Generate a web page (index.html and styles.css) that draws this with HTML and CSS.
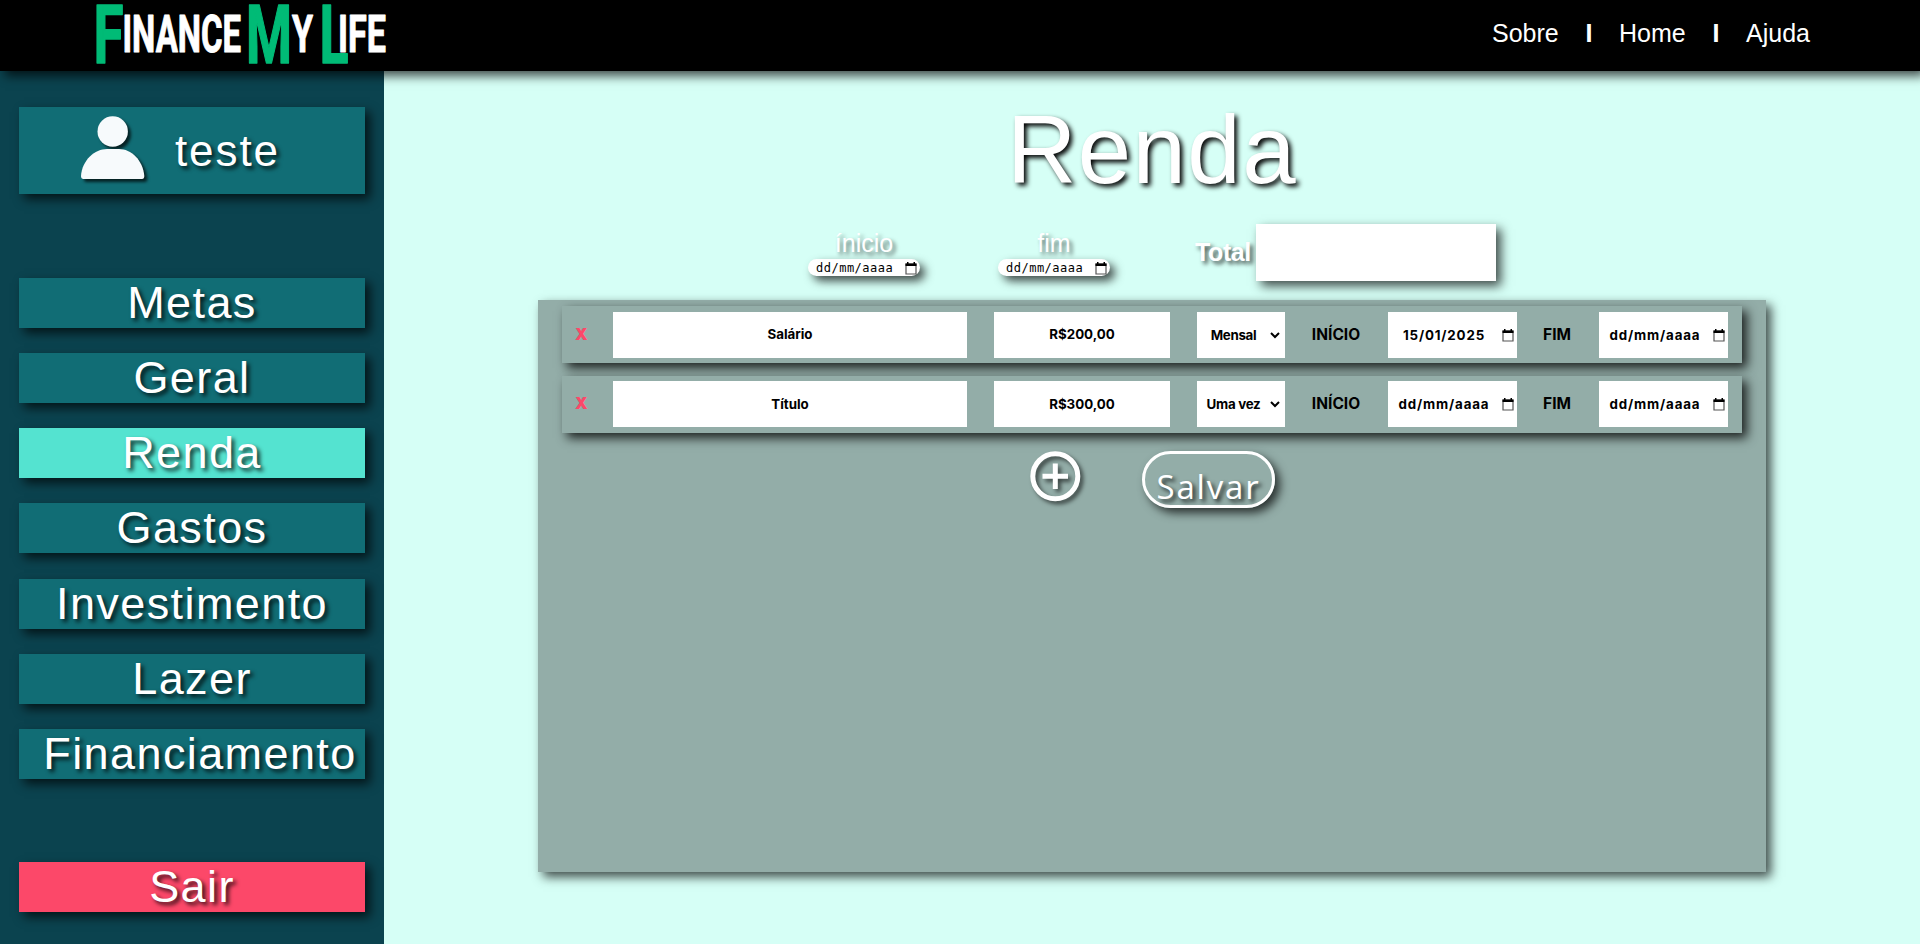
FILE: index.html
```
<!DOCTYPE html>
<html lang="pt-BR">
<head>
<meta charset="utf-8">
<title>Renda</title>
<link rel="stylesheet" href="styles.css">
</head>
<body>
<header class="topbar">
  <svg class="logo" width="300" height="71" viewBox="90 0 300 71">
    <g class="logo-big">
      <text x="93.500" y="63" textLength="30" lengthAdjust="spacingAndGlyphs">F</text>
      <text x="246" y="63" textLength="46" lengthAdjust="spacingAndGlyphs">M</text>
      <text x="319.500" y="62.500" textLength="29" lengthAdjust="spacingAndGlyphs">L</text>
    </g>
    <g class="logo-small">
      <text x="122.500" y="51.500" textLength="118.500" lengthAdjust="spacingAndGlyphs">INANCE</text>
      <text x="292" y="51.500" textLength="21" lengthAdjust="spacingAndGlyphs">Y</text>
      <text x="338" y="51.500" textLength="48" lengthAdjust="spacingAndGlyphs">IFE</text>
    </g>
  </svg>
  <nav class="topnav"><a>Sobre</a><b>I</b><a>Home</a><b>I</b><a>Ajuda</a></nav>
</header>
<div class="layout">
  <aside class="sidebar">
    <div class="user">
      <svg class="avatar" width="64" height="64" viewBox="0 0 64 64"><circle cx="31.700" cy="15.500" r="15.200"/><path d="M0 60C1 44 14 33 26 33H38C50 33 62 44 63.300 60Q63.300 63 61 63H2.500Q0 63 0 60Z"/></svg>
      <span>teste</span>
    </div>
    <nav class="menu">
      <a class="item">Metas</a>
      <a class="item">Geral</a>
      <a class="item active">Renda</a>
      <a class="item">Gastos</a>
      <a class="item">Investimento</a>
      <a class="item">Lazer</a>
      <a class="item wide">Financiamento</a>
    </nav>
    <a class="item exit">Sair</a>
  </aside>
  <main class="content">
    <h1>Renda</h1>
    <div class="filters">
      <label class="period"><span>ínicio</span><span class="pill">dd/mm/aaaa<svg class="cal" width="12" height="13" viewBox="0 0 12 13"><path class="frame" d="M1 2H11V12H1Z"/><path class="head" d="M.5 1.500H11.500V4H.5ZM2 0H3.500V2H2ZM8.500 0H10V2H8.500Z"/></svg></span></label>
      <label class="period"><span>fim</span><span class="pill">dd/mm/aaaa<svg class="cal" width="12" height="13" viewBox="0 0 12 13"><path class="frame" d="M1 2H11V12H1Z"/><path class="head" d="M.5 1.500H11.500V4H.5ZM2 0H3.500V2H2ZM8.500 0H10V2H8.500Z"/></svg></span></label>
      <div class="total"><b>Total</b><div class="total-box"></div></div>
    </div>
    <section class="panel">
      <div class="row">
        <span class="remove">X</span><div class="field">Salário</div><div class="field">R$200,00</div>
        <div class="field select"><span>Mensal</span><svg width="10" height="7" viewBox="0 0 10 7"><path d="M1 1L5 5L9 1"/></svg></div>
        <span class="tag">INÍCIO</span>
        <div class="field date"><span class="filled">15/01/2025</span><svg class="cal" width="12" height="13" viewBox="0 0 12 13"><path class="frame" d="M1 2H11V12H1Z"/><path class="head" d="M.5 1.500H11.500V4H.5ZM2 0H3.500V2H2ZM8.500 0H10V2H8.500Z"/></svg></div>
        <span class="tag">FIM</span>
        <div class="field date"><span>dd/mm/aaaa</span><svg class="cal" width="12" height="13" viewBox="0 0 12 13"><path class="frame" d="M1 2H11V12H1Z"/><path class="head" d="M.5 1.500H11.500V4H.5ZM2 0H3.500V2H2ZM8.500 0H10V2H8.500Z"/></svg></div>
      </div>
      <div class="row second">
        <span class="remove">X</span><div class="field">Título</div><div class="field">R$300,00</div>
        <div class="field select"><span>Uma vez</span><svg width="10" height="7" viewBox="0 0 10 7"><path d="M1 1L5 5L9 1"/></svg></div>
        <span class="tag">INÍCIO</span>
        <div class="field date"><span>dd/mm/aaaa</span><svg class="cal" width="12" height="13" viewBox="0 0 12 13"><path class="frame" d="M1 2H11V12H1Z"/><path class="head" d="M.5 1.500H11.500V4H.5ZM2 0H3.500V2H2ZM8.500 0H10V2H8.500Z"/></svg></div>
        <span class="tag">FIM</span>
        <div class="field date"><span>dd/mm/aaaa</span><svg class="cal" width="12" height="13" viewBox="0 0 12 13"><path class="frame" d="M1 2H11V12H1Z"/><path class="head" d="M.5 1.500H11.500V4H.5ZM2 0H3.500V2H2ZM8.500 0H10V2H8.500Z"/></svg></div>
      </div>
      <div class="actions">
        <svg class="add" width="51" height="51" viewBox="0 0 51 51"><circle cx="25.300" cy="25.300" r="22.500"/><path d="M25.300 12.500V38M12.500 25.300H38"/></svg>
        <div class="save">Salvar</div>
      </div>
    </section>
  </main>
</div>
</body>
</html>
```
FILE: styles.css
```
* { box-sizing: border-box; }
body { margin: 0; height: 944px; overflow: hidden; background: #d6fff6; font-family: Arial, "Liberation Sans", sans-serif; color: #fff; }
.topbar { position: relative; z-index: 1; height: 71px; padding: 0 110px 0 90px; background: #000; display: flex; justify-content: space-between; box-shadow: 5px 5px 10px rgba(0,0,0,.7); }
.logo { display: block; overflow: visible; font-family: Roboto, sans-serif; font-weight: 700; }
.logo-big { font-size: 82px; fill: #00bb76; stroke: #00bb76; stroke-width: 1.5px; stroke-linejoin: round; }
.logo-small { font-size: 52px; fill: #fff; stroke: #fff; stroke-width: 1px; stroke-linejoin: round; }
.topnav { display: flex; gap: 26.700px; font-size: 25px; line-height: 28px; padding-top: 19px; }
.layout { display: flex; height: 873px; }
.sidebar { width: 384px; padding: 36px 19px 0; background: #0b434f; }
.user { width: 346px; height: 87px; padding: 9px 0 0 62px; display: flex; gap: 30px; background: #116d75; box-shadow: 5px 5px 10px rgba(0,0,0,.7); font-size: 44px; letter-spacing: 1.900px; text-shadow: 3px 3px 4px rgba(0,0,0,.8); }
.user span { line-height: 70px; }
.avatar { fill: #f7fafc; filter: drop-shadow(3px 3px 1.500px rgba(0,0,0,.7)); }
.menu { margin-top: 84px; display: flex; flex-direction: column; gap: 25.160px; }
.item { display: block; width: 346px; height: 50px; line-height: 49px; background: #116d75; text-align: center; font-size: 45px; letter-spacing: 1.400px; text-shadow: 3px 3px 4px rgba(0,0,0,.8); box-shadow: 5px 5px 10px rgba(0,0,0,.7); }
.active { background: #54e3d0; }
.wide { padding-left: 16px; }
.exit { margin-top: 83px; background: #fc4869; }
.content { width: 1536px; display: flex; flex-direction: column; align-items: center; }
h1 { margin: 24px 0 0; font-size: 96px; font-weight: 400; line-height: 110px; letter-spacing: 1.400px; text-shadow: 3px 3px 5px #000; }
.filters { width: 688px; height: 76px; margin-top: 19px; display: flex; align-items: flex-start; }
.period { width: 112px; margin: 4px 78px 0 0; display: flex; flex-direction: column; align-items: center; font-size: 25px; line-height: 30px; text-shadow: 3px 3px 4px rgba(0,0,0,.6); }
.pill { width: 112px; height: 17px; margin-top: 1px; padding: 1px 3px 0 8px; border-radius: 9px; background: #fff; color: #000; display: flex; align-items: center; justify-content: space-between; font: 12px/16px "DejaVu Sans Mono", monospace; letter-spacing: .5px; text-shadow: none; box-shadow: 5px 5px 10px rgba(0,0,0,.7); }
.pill .cal { flex: none; }
.cal .frame { fill: none; stroke: #555; stroke-width: 1.200px; }
.cal .head { fill: #000; }
.total { display: flex; margin-left: 8px; }
.total b { width: 60px; padding-top: 14px; font-size: 25px; line-height: 28px; letter-spacing: -.4px; text-indent: -1px; text-shadow: 3px 3px 4px rgba(0,0,0,.7); }
.total-box { width: 240px; height: 57px; background: #fff; box-shadow: 5px 5px 10px rgba(0,0,0,.7); }
.panel { width: 1228px; height: 572px; padding: 6px 24px; background: #93ada8; box-shadow: 5px 5px 10px rgba(0,0,0,.7); }
.row { height: 57px; padding-top: 6px; display: grid; grid-template-columns: 51px 354px 27px 176px 27px 88px 27px 49px 27px 129px 26px 29px 27px 129px; font: 700 13.330px/45px Inter, sans-serif; color: #000; background: #93ada8; box-shadow: 5px 5px 10px rgba(0,0,0,.8); }
.second { margin-top: 13px; padding-top: 5px; }
.row > :nth-child(3) { grid-column: 4; }
.row > :nth-child(4) { grid-column: 6; }
.row > :nth-child(5) { grid-column: 8; }
.row > :nth-child(6) { grid-column: 10; }
.row > :nth-child(7) { grid-column: 12; }
.row > :nth-child(8) { grid-column: 14; }
.field { height: 46px; background: #fff; text-align: center; }
.second .field { line-height: 47px; }
.remove { padding-left: 13px; font-size: 16px; font-weight: 900; color: #fc4869; }
.tag { font-size: 15.500px; letter-spacing: 0; text-indent: -1px; text-align: center; white-space: nowrap; }
.select { display: flex; align-items: center; padding-right: 5px; letter-spacing: -.3px; }
.select span { flex: 1; }
.select svg { fill: none; stroke: #000; stroke-width: 2px; }
.date { display: flex; align-items: center; padding: 0 3px 0 8px; white-space: nowrap; }
.date span { width: 96px; letter-spacing: .85px; }
.date .cal { margin-left: auto; flex: none; }
.actions { display: flex; gap: 61px; padding: 18px 0 0 467px; }
.add { margin-left: 1px; fill: none; stroke: #fff; stroke-width: 5px; filter: drop-shadow(3px 3px 2px rgba(0,0,0,.6)); }
.save { width: 133px; height: 57px; border: 3px solid #fff; border-radius: 29px; text-align: center; font: 500 33px/66px "Comic Sans MS", "Open Sans", sans-serif; letter-spacing: 1.800px; text-shadow: 3px 3px 4px rgba(0,0,0,.8); box-shadow: 5px 5px 10px rgba(0,0,0,.7); }
```
